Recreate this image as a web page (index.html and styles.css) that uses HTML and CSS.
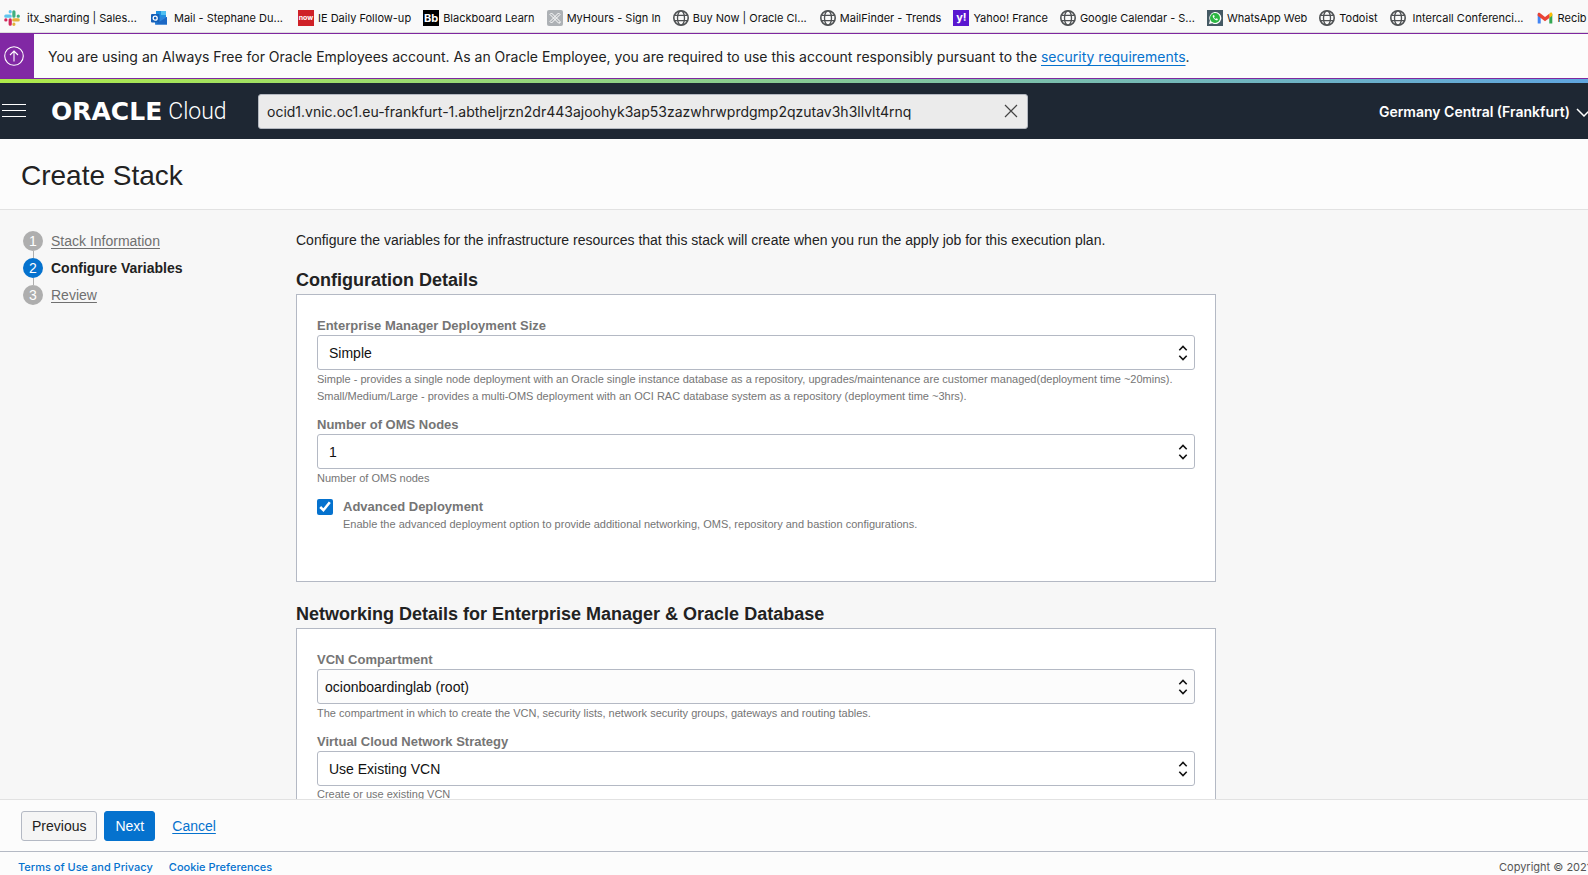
FILE: index.html
```html
<!DOCTYPE html>
<html lang="en">
<head>
<meta charset="utf-8">
<title>Create Stack</title>
<link rel="stylesheet" href="styles.css">
</head>
<body class="page">
<svg class="defs" aria-hidden="true">
  <symbol id="globe" viewBox="0 0 16 16">
    <g fill="none" stroke="#4f5254" stroke-width="1.3">
      <circle cx="8" cy="8" r="7.2" stroke-width="1.6"/>
      <ellipse cx="8" cy="8" rx="3.5" ry="7.2"/>
      <path d="M1.6 5.3h12.8M1.6 10.7h12.8"/>
    </g>
  </symbol>
  <symbol id="updown" viewBox="0 0 10 16">
    <path d="M1.3 5.2 5 1.5l3.7 3.7M1.3 10.8 5 14.5l3.7-3.7" fill="none" stroke="#111" stroke-width="1.6"/>
  </symbol>
</svg>

<nav class="bookmarks" aria-label="Bookmarks">
  <a class="bookmark bookmark-wide bookmark-loose" href="#"><svg class="favicon" viewBox="0 0 16 16"><g stroke-width="3.2" stroke-linecap="round"><path d="M6.200 1.700v.1M1.800 6.200h4.400" stroke="#5fc5ee"/><path d="M9.900 1.800v4.400M14.200 6.200h.1" stroke="#3eb07e"/><path d="M9.800 9.900h4.400M9.900 14.200v.1" stroke="#e3b23c"/><path d="M6.200 9.800v4.400M1.800 9.900h.1" stroke="#d2285c"/></g></svg>itx_sharding | Sales...</a>
  <a class="bookmark bookmark-wide bookmark-loose" href="#"><svg class="favicon" viewBox="0 0 16 16"><path d="M5 1h10v8H5z" fill="#1d8fe0"/><path d="M10 1h5v4h-5z" fill="#4fc0f2"/><path d="M4 7l12 0v7.500H4z" fill="#2b86dc"/><path d="M4 14.500 16 7v7.500z" fill="#1c68c4"/><rect y="4" width="8.500" height="8.500" rx="1" fill="#1560b8"/><circle cx="4.200" cy="8.200" r="2" fill="none" stroke="#fff" stroke-width="1.300"/></svg>Mail - Stephane Du...</a>
  <a class="bookmark" href="#"><span class="favicon favicon-now">now</span>IE Daily Follow-up</a>
  <a class="bookmark" href="#"><span class="favicon favicon-bb">Bb</span>Blackboard Learn</a>
  <a class="bookmark" href="#"><svg class="favicon" viewBox="0 0 16 16"><rect width="16" height="16" rx="2" fill="#adb1b5"/><path d="M3 4.500 4.500 3 13 11.500V13h-1.500zM11.500 3 13 4.500 4.500 13 3 11.500z" fill="#adb1b5" stroke="#fff"/></svg>MyHours - Sign In</a>
  <a class="bookmark bookmark-wide" href="#"><svg class="favicon"><use href="#globe"/></svg>Buy Now | Oracle Cl...</a>
  <a class="bookmark" href="#"><svg class="favicon"><use href="#globe"/></svg>MailFinder - Trends</a>
  <a class="bookmark" href="#"><span class="favicon favicon-yahoo">y!</span>Yahoo! France</a>
  <a class="bookmark bookmark-wide" href="#"><svg class="favicon"><use href="#globe"/></svg>Google Calendar - S...</a>
  <a class="bookmark" href="#"><svg class="favicon" viewBox="0 0 16 16"><path d="M0 0h16v16H0z" fill="#455a64"/><path d="M2 14l.9-3.400A6 6 0 1 1 5.300 13.200z" fill="#fff"/><circle cx="8" cy="8" r="5" fill="#2cb742"/><path d="M5.800 5.500c-.6 2 2.500 5.300 4.700 4.700l.4-1.200-1.400-.8-.8.8C7.800 8.600 7.300 8 7 7.300l.7-.8-.7-1.400z" fill="#fff"/></svg>WhatsApp Web</a>
  <a class="bookmark" href="#"><svg class="favicon"><use href="#globe"/></svg>Todoist</a>
  <a class="bookmark bookmark-wide bookmark-loose" href="#"><svg class="favicon"><use href="#globe"/></svg>Intercall Conferenci...</a>
  <a class="bookmark bookmark-last" href="#"><svg class="favicon" viewBox="0 0 16 16"><path d="M.7 4v9.500h3V6z" fill="#4285f4"/><path d="M15.300 4v9.500h-3V6z" fill="#34a853"/><path d="M12.300 4v4l3-2.200V4c0-1.800-1.700-2.200-3 0z" fill="#fbbc04"/><path d="M.7 4v1.800L8 11.200l4.300-3.200V3.700L8 7 3.200 3.200C2 2.300.7 2.800.7 4z" fill="#ea4335"/></svg>Recib</a>
</nav>

<div class="notice">
  <div class="notice-badge"><svg class="notice-icon" viewBox="0 0 20 20"><g fill="none" stroke="#fff" stroke-width="1.100"><circle cx="10" cy="10" r="9.300"/><path d="M10 15.500V5M6 9l4-4 4 4"/></g></svg></div>
  <p class="notice-text">You are using an Always Free for Oracle Employees account. As an Oracle Employee, you are required to use this account responsibly pursuant to the <a class="notice-link" href="#">security requirements</a>.</p>
</div>

<header class="topbar">
  <button class="menu" aria-label="Menu"><svg class="menu-icon" viewBox="0 0 24 14"><path d="M0 .5h24M0 6.500h24M0 12.500h24" stroke="#fff"/></svg></button>
  <a class="brand" href="#"><span class="brand-name">ORACLE</span><span class="brand-product">Cloud</span></a>
  <div class="search">
    <input class="search-input" type="text" aria-label="Search" value="ocid1.vnic.oc1.eu-frankfurt-1.abtheljrzn2dr443ajoohyk3ap53zazwhrwprdgmp2qzutav3h3llvlt4rnq">
    <button class="search-clear" aria-label="Clear"><svg class="clear-icon" viewBox="0 0 14 14"><path d="M1 1l12 12M13 1 1 13" stroke="#444" stroke-width="1.200"/></svg></button>
  </div>
  <button class="region">Germany Central (Frankfurt)<svg class="region-icon" viewBox="0 0 16 9"><path d="M1 1l7 7 7-7" fill="none" stroke="#fff" stroke-width="1.500"/></svg></button>
</header>

<div class="titlebar"><h1 class="title">Create Stack</h1></div>

<div class="workspace">
  <ol class="steps">
    <li class="step"><span class="step-number">1</span><a class="step-link" href="#">Stack Information</a></li>
    <li class="step step-current"><span class="step-number">2</span><span>Configure Variables</span></li>
    <li class="step"><span class="step-number">3</span><a class="step-link" href="#">Review</a></li>
  </ol>
  <main class="content">
    <p class="intro">Configure the variables for the infrastructure resources that this stack will create when you run the apply job for this execution plan.</p>

    <h2 class="section-title">Configuration Details</h2>
    <section class="panel">
      <div class="field">
        <label class="label" for="size">Enterprise Manager Deployment Size</label>
        <div class="select-box"><select class="select" id="size"><option>Simple</option></select><svg class="select-icon"><use href="#updown"/></svg></div>
        <p class="help">Simple - provides a single node deployment with an Oracle single instance database as a repository, upgrades/maintenance are customer managed(deployment time ~20mins). Small/Medium/Large - provides a multi-OMS deployment with an OCI RAC database system as a repository (deployment time ~3hrs).</p>
      </div>
      <div class="field">
        <label class="label" for="nodes">Number of OMS Nodes</label>
        <div class="select-box"><select class="select" id="nodes"><option>1</option></select><svg class="select-icon"><use href="#updown"/></svg></div>
        <p class="help">Number of OMS nodes</p>
      </div>
      <div class="check-field">
        <input class="checkbox" type="checkbox" id="advanced" checked>
        <div>
          <label class="label" for="advanced">Advanced Deployment</label>
          <p class="help help-tight">Enable the advanced deployment option to provide additional networking, OMS, repository and bastion configurations.</p>
        </div>
      </div>
    </section>

    <h2 class="section-title">Networking Details for Enterprise Manager &amp; Oracle Database</h2>
    <section class="panel">
      <div class="field">
        <label class="label" for="compartment">VCN Compartment</label>
        <div class="select-box"><select class="select select-tinted" id="compartment"><option>ocionboardinglab (root)</option></select><svg class="select-icon"><use href="#updown"/></svg></div>
        <p class="help">The compartment in which to create the VCN, security lists, network security groups, gateways and routing tables.</p>
      </div>
      <div class="field">
        <label class="label" for="strategy">Virtual Cloud Network Strategy</label>
        <div class="select-box"><select class="select" id="strategy"><option>Use Existing VCN</option></select><svg class="select-icon"><use href="#updown"/></svg></div>
        <p class="help help-tight">Create or use existing VCN</p>
      </div>
    </section>
  </main>
</div>

<div class="actions">
  <button class="button">Previous</button>
  <button class="button button-primary">Next</button>
  <a class="cancel" href="#">Cancel</a>
</div>

<footer class="footer">
  <a class="footer-link" href="#">Terms of Use and Privacy</a>
  <a class="footer-link" href="#">Cookie Preferences</a>
  <span class="copyright">Copyright © 2021</span>
</footer>
</body>
</html>
```
FILE: styles.css
```css
* {
  box-sizing: border-box;
}

.page {
  margin: 0;
  height: 100vh;
  display: flex;
  flex-direction: column;
  overflow: hidden;
  background: #f7f7f7;
  color: #222;
  font: 14px/20px "Liberation Sans", Arial, sans-serif;
}

.page > * {
  flex-shrink: 0;
}

.defs {
  position: absolute;
  width: 0;
  height: 0;
}

/* Browser bookmarks */
.bookmarks {
  display: flex;
  height: 33px;
  padding: 3px 0 0 4px;
  background: #f9f9f9;
  border-bottom: 1px solid #ddd;
  font: 11px/16px Inter, sans-serif;
}

.bookmark {
  display: flex;
  align-items: center;
  flex-shrink: 0;
  gap: 4px;
  margin-right: 12px;
  color: #111;
  text-decoration: none;
  white-space: nowrap;
}

.bookmark-wide {
  width: 134px;
  margin-right: 13px;
}

.bookmark-loose {
  gap: 7px;
}

.bookmark-last {
  margin-right: 0;
  gap: 5px;
}

.favicon {
  flex: none;
  width: 16px;
  height: 16px;
  color: #fff;
  text-align: center;
  font-weight: 700;
}

.favicon-now {
  background: #cf2127;
  font-size: 7px;
}

.favicon-bb {
  background: #000;
  font-size: 11px;
}

.favicon-yahoo {
  background: #5a17d0;
  font-size: 11px;
  line-height: 14px;
}

/* Account notice */
.notice {
  display: flex;
  height: 46px;
  border-top: 1px solid #7f27a0;
  border-bottom: 1px solid #7f27a0;
  background: #fcfcfc;
}

.notice-badge {
  display: flex;
  align-items: center;
  width: 34px;
  padding-left: 4px;
  background: #8128a4;
}

.notice-icon {
  width: 20px;
  height: 20px;
}

.notice-text {
  margin: 0 14px;
  font: 14px/46px Inter, sans-serif;
  white-space: nowrap;
}

.notice-link {
  color: #0572ce;
  text-underline-offset: 3px;
}

/* Console header */
.topbar {
  display: flex;
  align-items: center;
  height: 60px;
  padding-left: 2px;
  border-top: 4px solid;
  border-image: linear-gradient(90deg, #aeea4a, #8fd186 40%, #5fa5e0) 1;
  background: #1e2733;
  color: #fff;
}

.menu {
  display: flex;
  padding: 0;
  border: 0;
  background: none;
}

.menu-icon {
  width: 24px;
  height: 14px;
}

.brand {
  display: flex;
  align-items: center;
  width: 182px;
  margin: 0 25px;
  padding-top: 2px;
  gap: 6px;
  color: #fff;
  text-decoration: none;
}

.brand-name {
  font: 700 25px/28px "DejaVu Sans", sans-serif;
}

.brand-product {
  font: 300 23px/28px Roboto, sans-serif;
}

.search {
  display: flex;
  align-items: center;
  width: 770px;
  height: 35px;
  padding: 0 9px 0 8px;
  border: 1px solid #b4b8c0;
  border-radius: 3px;
  background: #ebebeb;
}

.search-input {
  flex: 1;
  padding: 2px 0 0;
  border: 0;
  outline: 0;
  background: none;
  color: #222;
  font: 14px/20px Inter, sans-serif;
}

.search-clear {
  display: flex;
  padding: 0;
  border: 0;
  background: none;
}

.clear-icon {
  width: 14px;
  height: 14px;
}

.region {
  display: flex;
  align-items: center;
  gap: 6px;
  margin: 0 -4px 0 auto;
  padding: 2px 0 0;
  border: 0;
  background: none;
  color: #fff;
  font: 600 14px/20px Inter, sans-serif;
  white-space: nowrap;
}

.region-icon {
  width: 16px;
  height: 9px;
}

/* Page title */
.titlebar {
  padding: 20px 21px 16px;
  border-bottom: 1px solid #e2e2e2;
  background: #fcfcfc;
}

.title {
  margin: 0;
  font-size: 28px;
  line-height: 34px;
  font-weight: 400;
}

/* Wizard */
.page > .workspace {
  display: flex;
  flex: 1;
  min-height: 0;
  overflow: hidden;
}

.steps {
  display: flex;
  flex-direction: column;
  gap: 7px;
  flex: none;
  width: 296px;
  margin: 0;
  padding: 21px 0 0 23px;
  list-style: none;
}

.step {
  display: flex;
  gap: 8px;
  position: relative;
  color: #707070;
}

.step + .step::before {
  content: "";
  position: absolute;
  left: 10px;
  top: -7px;
  height: 7px;
  border-left: 1px solid #aeaeae;
}

.step-number {
  width: 20px;
  height: 20px;
  border-radius: 50%;
  background: #aeaeae;
  color: #fff;
  text-align: center;
}

.step-current {
  color: #222;
  font-weight: 700;
}

.step-current .step-number {
  background: #0572ce;
  font-weight: 400;
}

.step-link {
  padding-top: 1px;
  color: #707070;
  line-height: 19px;
  text-underline-offset: 2px;
}

.content {
  flex: 1;
  min-width: 0;
  max-width: 920px;
  padding-top: 20px;
}

.intro {
  margin: 0 0 18px;
}

.section-title {
  margin: 0 0 2px;
  font-size: 18px;
  line-height: 24px;
}

.panel {
  min-height: 288px;
  margin-bottom: 20px;
  padding: 20px;
  border: 1px solid #b4b9c4;
  background: #fff;
}

.field {
  margin-bottom: 9px;
}

.label {
  display: block;
  padding-top: 2px;
  color: #757575;
  font-size: 13px;
  line-height: 18px;
  font-weight: 700;
}

.select-box {
  position: relative;
}

.select {
  display: block;
  appearance: none;
  width: 100%;
  height: 35px;
  padding: 0 30px 0 11px;
  border: 1px solid #b4b9c4;
  border-radius: 3px;
  background: #fff;
  color: #111;
  font: inherit;
}

.select-tinted {
  padding-left: 7px;
  background: #fcfcfc;
}

.select-icon {
  position: absolute;
  top: 10px;
  right: 7px;
  width: 10px;
  height: 16px;
  pointer-events: none;
}

.help {
  margin: 0;
  padding-top: 1px;
  color: #757575;
  font-size: 11px;
  line-height: 17px;
}

.help-tight {
  padding-top: 0;
}

.check-field {
  display: flex;
  gap: 10px;
}

.checkbox {
  flex: none;
  width: 16px;
  height: 16px;
  margin: 3px 0;
  accent-color: #0572ce;
}

/* Wizard actions */
.actions {
  display: flex;
  align-items: center;
  gap: 7px;
  padding: 11px 21px 10px;
  border-top: 1px solid #e2e2e2;
  background: #fcfcfc;
}

.button {
  height: 30px;
  padding: 0 10px;
  border: 1px solid #b4b9c4;
  border-radius: 3px;
  background: #f5f5f5;
  color: #222;
  font: inherit;
}

.button-primary {
  border-color: #0572ce;
  background: #0572ce;
  color: #fff;
}

.cancel {
  margin-left: 10px;
  color: #0572ce;
  text-underline-offset: 2px;
}

.footer {
  display: flex;
  gap: 16px;
  height: 24px;
  padding: 7px 0 0 18px;
  border-top: 1px solid #b4b9c4;
  background: #fcfcfc;
  font: 11px/16px Inter, sans-serif;
}

.footer-link {
  color: #0572ce;
  font-weight: 500;
  text-decoration: none;
  white-space: nowrap;
}

.copyright {
  flex: 0 0 89px;
  min-width: 0;
  margin-left: auto;
  color: #555;
  white-space: nowrap;
}
```
